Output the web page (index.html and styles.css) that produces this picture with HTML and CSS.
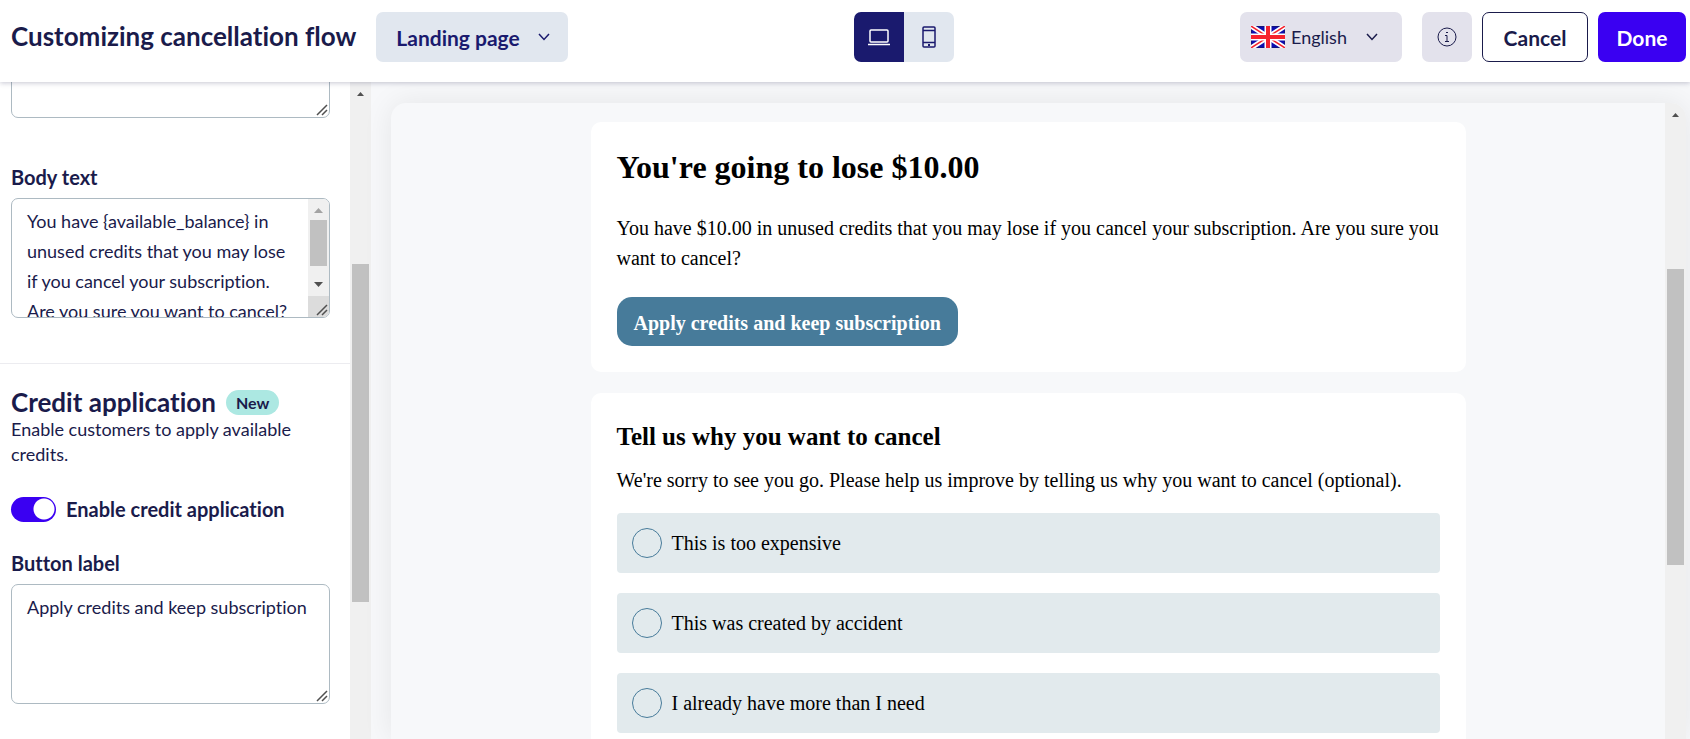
FILE: index.html
```html
<!DOCTYPE html>
<html lang="en">
<head>
    <meta charset="utf-8">
    <title>Customizing cancellation flow</title>
    <link rel="stylesheet" href="styles.css">
</head>
<body>
    <header class="topbar">
        <div class="topbar-left">
            <h1>Customizing cancellation flow</h1>
            <div class="dropdown page-select">
                <select aria-label="Page">
                    <option>Landing page</option>
                </select>
                <svg class="chevron" viewBox="0 0 12 8"><path d="M1 1l5 5.500l5-5.500"/></svg>
            </div>
        </div>
        <div class="device-toggle">
            <button type="button" class="active" aria-label="Desktop">
                <svg width="22" height="18" viewBox="0 0 22 18"><rect x="2" y="2" width="18" height="12" rx="1"/><path d="M0 16.500h22"/></svg>
            </button>
            <button type="button" aria-label="Mobile">
                <svg width="14" height="22" viewBox="0 0 14 22"><rect x="1" y="1" width="12" height="20" rx="1"/><path d="M1 4.500h12M1 16.500h12"/><rect x="6.500" y="18.500" width="1" height="1" stroke-width="1"/></svg>
            </button>
        </div>
        <div class="topbar-right">
            <div class="dropdown language-select">
                <svg class="flag" viewBox="0 0 34 22">
                    <rect width="34" height="22" fill="#0d0dae"/>
                    <path d="M0 0L34 22M34 0L0 22" stroke="#fff" stroke-width="5"/>
                    <path d="M0 0L34 22M34 0L0 22" stroke="#f5222d" stroke-width="1.500"/>
                    <path d="M17 0v22M0 11h34" stroke="#fff" stroke-width="7"/>
                    <path d="M17 0v22M0 11h34" stroke="#f5222d" stroke-width="4"/>
                </svg>
                <select aria-label="Language">
                    <option>English</option>
                </select>
                <svg class="chevron" viewBox="0 0 12 8"><path d="M1 1l5 5.500l5-5.500"/></svg>
            </div>
            <button type="button" class="btn info" aria-label="Info">
                <svg width="20" height="20" viewBox="0 0 20 20"><circle cx="10" cy="10" r="9"/><path d="M8 8.500h2v6M8 14.500h4M9 5.500h2"/></svg>
            </button>
            <button type="button" class="btn cancel">Cancel</button>
            <button type="button" class="btn done">Done</button>
        </div>
    </header>

    <main class="layout">
        <aside class="sidebar">
            <div class="settings">
                <div class="field scrolled">
                    <div class="textarea-wrap">
                        <textarea aria-label="Heading"></textarea>
                        <svg class="grip" viewBox="0 0 12 12"><path d="M1 11L11 1M6 11L11 6"/></svg>
                    </div>
                </div>
                <div class="field">
                    <label for="body-text">Body text</label>
                    <div class="textarea-wrap overflowing">
                        <textarea id="body-text">You have {available_balance} in unused credits that you may lose if you cancel your subscription. Are you sure you want to cancel?</textarea>
                        <div class="scrollbar inner-bar">
                            <svg class="arrow muted" viewBox="0 0 9 5"><path d="M0 5l4.500-5L9 5z"/></svg>
                            <div class="thumb"></div>
                            <svg class="arrow" viewBox="0 0 9 5"><path d="M0 0l4.500 5L9 0z"/></svg>
                        </div>
                        <svg class="grip" viewBox="0 0 12 12"><path d="M1 11L11 1M6 11L11 6"/></svg>
                    </div>
                </div>
                <section class="credit">
                    <div class="credit-title">
                        <h2>Credit application</h2>
                        <span class="badge">New</span>
                    </div>
                    <p>Enable customers to apply available credits.</p>
                    <label class="switch">
                        <input type="checkbox" checked>
                        Enable credit application
                    </label>
                    <div class="field">
                        <label for="button-label">Button label</label>
                        <div class="textarea-wrap">
                            <textarea id="button-label">Apply credits and keep subscription</textarea>
                            <svg class="grip" viewBox="0 0 12 12"><path d="M1 11L11 1M6 11L11 6"/></svg>
                        </div>
                    </div>
                </section>
            </div>
            <div class="scrollbar side-bar">
                <svg class="arrow" viewBox="0 0 9 5"><path d="M0 5l4.500-5L9 5z"/></svg>
                <div class="thumb"></div>
            </div>
        </aside>

        <div class="preview">
            <div class="frame">
                <div class="frame-content">
                    <section class="card">
                        <h2 class="offer-title">You're going to lose $10.00</h2>
                        <p class="offer-text">You have $10.00 in unused credits that you may lose if you cancel your subscription. Are you sure you want to cancel?</p>
                        <button type="button" class="apply">Apply credits and keep subscription</button>
                    </section>
                    <section class="card">
                        <h3>Tell us why you want to cancel</h3>
                        <p>We're sorry to see you go. Please help us improve by telling us why you want to cancel (optional).</p>
                        <div class="reasons">
                            <label><input type="radio" name="reason">This is too expensive</label>
                            <label><input type="radio" name="reason">This was created by accident</label>
                            <label><input type="radio" name="reason">I already have more than I need</label>
                        </div>
                    </section>
                </div>
                <div class="scrollbar frame-bar">
                    <svg class="arrow" viewBox="0 0 9 5"><path d="M0 5l4.500-5L9 5z"/></svg>
                    <div class="thumb"></div>
                </div>
            </div>
        </div>
    </main>
</body>
</html>
```

FILE: styles.css
```css
* {
    box-sizing: border-box;
}

body {
    margin: 0;
    height: 100vh;
    display: flex;
    flex-direction: column;
    overflow: hidden;
    font-family: Lato, "Liberation Sans", sans-serif;
    font-size: 18px;
    font-variant-ligatures: none;
    color: #1a1b4b;
    background: #fff;
}

h1, h2, h3, p {
    margin: 0;
}

button, select, textarea {
    font: inherit;
    font-variant-ligatures: none;
    color: inherit;
}

svg {
    fill: none;
    stroke: currentColor;
}

/* top bar */
.topbar {
    position: relative;
    z-index: 1;
    display: flex;
    justify-content: space-between;
    padding: 12px 4px 20px 11px;
    background: #fff;
    box-shadow: 0 1px 5px rgba(26, 27, 75, 0.25);
}

.topbar-left, .topbar-right {
    display: flex;
    align-items: center;
}

.topbar-left {
    gap: 20px;
}

.topbar-right {
    gap: 10px;
}

.topbar h1 {
    padding-bottom: 2px;
    font-size: 26px;
    line-height: 32px;
    white-space: nowrap;
}

.dropdown {
    position: relative;
    height: 50px;
}

.dropdown select {
    width: 100%;
    height: 100%;
    border: none;
    border-radius: 7px;
    appearance: none;
}

.chevron {
    position: absolute;
    top: 21px;
    right: 18px;
    width: 12px;
    height: 8px;
    stroke-width: 1.5;
    pointer-events: none;
}

.page-select {
    width: 192px;
    color: #1a1a6e;
}

.page-select select {
    padding: 0 20px;
    font-size: 21px;
    font-weight: bold;
    background: #e1e7ef;
}

.device-toggle {
    display: flex;
    height: 50px;
    border-radius: 7px;
    overflow: hidden;
    color: #1a1a6e;
}

.device-toggle button {
    display: flex;
    align-items: center;
    justify-content: center;
    width: 50px;
    padding: 0;
    border: none;
    background: #e1e7ef;
}

.device-toggle svg {
    stroke-width: 1.5;
}

.device-toggle .active {
    color: #fff;
    background: #1a1a6e;
}

.language-select {
    width: 162px;
    margin-right: 10px;
}

.language-select select {
    padding: 0 51px;
    background: #e3e2ec;
}

.language-select .chevron {
    right: 24px;
}

.flag {
    position: absolute;
    top: 14px;
    left: 11px;
    width: 34px;
    height: 22px;
}

.btn {
    height: 50px;
    padding: 0;
    border: none;
    border-radius: 7px;
    font-size: 21px;
    font-weight: bold;
}

.info {
    display: flex;
    align-items: center;
    justify-content: center;
    width: 50px;
    background: #e3e2ec;
}

.cancel {
    width: 106px;
    border: 1px solid #1a1b4b;
    background: #fff;
}

.done {
    width: 88px;
    color: #fff;
    background: #3a00f2;
}

/* scrollbars */
.scrollbar {
    flex: none;
    display: flex;
    flex-direction: column;
    align-items: center;
    width: 21px;
    background: #f0f0f0;
}

.scrollbar .thumb {
    width: 17px;
    background: #c1c1c1;
}

.arrow {
    width: 7px;
    height: 4px;
    margin: 10px 0;
    fill: #505050;
    stroke: none;
}

.arrow.muted {
    fill: #a3a3a3;
}

/* settings column */
.layout {
    flex: 1;
    display: flex;
    min-height: 0;
}

.sidebar {
    flex: none;
    display: flex;
    width: 371px;
}

.settings {
    flex: 1;
    overflow: hidden;
}

.field {
    padding: 0 20px 0 11px;
}

.field.scrolled {
    margin: -84px 0 45px;
}

.field label {
    display: block;
    margin-bottom: 7px;
    font-size: 20px;
    font-weight: bold;
    line-height: 28px;
}

.textarea-wrap {
    position: relative;
    height: 120px;
}

.textarea-wrap textarea {
    display: block;
    width: 100%;
    height: 100%;
    padding: 7px 4px 0 15px;
    border: 1px solid #adbac2;
    border-radius: 7px;
    line-height: 30px;
    resize: none;
    overflow: hidden;
    background: #fff;
}

.textarea-wrap.overflowing textarea {
    padding-right: 36px;
}

.grip {
    position: absolute;
    right: 2px;
    bottom: 2px;
    width: 12px;
    height: 12px;
    stroke: #505050;
    stroke-width: 1.5;
}

.inner-bar {
    position: absolute;
    top: 1px;
    right: 1px;
    height: 118px;
    border-bottom: 21px solid #dcdcdc;
    border-radius: 0 6px 6px 0;
}

.inner-bar .arrow {
    width: 9px;
    height: 5px;
    margin: 9px 0 7px;
}

.inner-bar .thumb {
    height: 46px;
    margin-bottom: 7px;
}

.side-bar .thumb {
    height: 338px;
    margin-top: 158px;
}

.credit {
    margin-top: 45px;
    padding-top: 24px;
    border-top: 1px solid #ececf0;
}

.credit-title {
    display: flex;
    align-items: center;
    gap: 10px;
    padding-left: 11px;
}

.credit h2 {
    font-size: 26px;
    line-height: 29px;
}

.badge {
    padding: 0 10px;
    border-radius: 13px;
    font-size: 16px;
    font-weight: bold;
    line-height: 25px;
    background: #ace8e2;
}

.credit p {
    padding: 0 20px 0 11px;
    line-height: 25px;
}

.switch {
    display: flex;
    align-items: center;
    gap: 10px;
    margin: 29px 0 27px;
    padding-left: 11px;
    font-size: 20px;
    font-weight: bold;
    line-height: 26px;
}

.switch input {
    width: 45px;
    height: 25px;
    margin: 0;
    border-radius: 13px;
    appearance: none;
    background: radial-gradient(circle at 33px 12px, #fff 10px, #3a00f2 11px);
}

/* preview */
.preview {
    flex: 1;
    padding: 21px 4px 0 20px;
    background: #f7f8fa;
}

.frame {
    display: flex;
    height: 100%;
    border-radius: 15px 15px 0 0;
    overflow: hidden;
    background: #f7f8fa;
    box-shadow: 0 0 30px rgba(0, 0, 0, 0.08);
}

.frame-content {
    flex: 1;
    padding: 19px 20px 0;
    font-family: "Liberation Serif", serif;
    font-size: 20px;
    color: #000;
}

.frame-bar .thumb {
    height: 296px;
    margin-top: 142px;
}

.card {
    max-width: 875px;
    margin: 0 auto 21px;
    padding: 26px;
    border-radius: 10px;
    background: #fff;
}

.card p {
    line-height: 30px;
}

.offer-title {
    font-size: 32px;
    line-height: 38px;
}

.card .offer-text {
    margin: 27px 0 24px;
}

.apply {
    display: block;
    height: 49px;
    padding: 3px 17px 0;
    border: none;
    border-radius: 15px;
    font-size: 20px;
    font-weight: bold;
    color: #fff;
    background: #477b9a;
}

.card h3 {
    margin-bottom: 10px;
    font-size: 25px;
    line-height: 36px;
}

.reasons {
    display: grid;
    gap: 20px;
    margin-top: 18px;
}

.reasons label {
    display: flex;
    align-items: center;
    gap: 10px;
    height: 60px;
    padding: 0 15px;
    border-radius: 4px;
    background: #e2eaed;
}

.reasons input {
    width: 30px;
    height: 30px;
    margin: 0;
    border: 1px solid #477b9a;
    border-radius: 50%;
    appearance: none;
}
```
